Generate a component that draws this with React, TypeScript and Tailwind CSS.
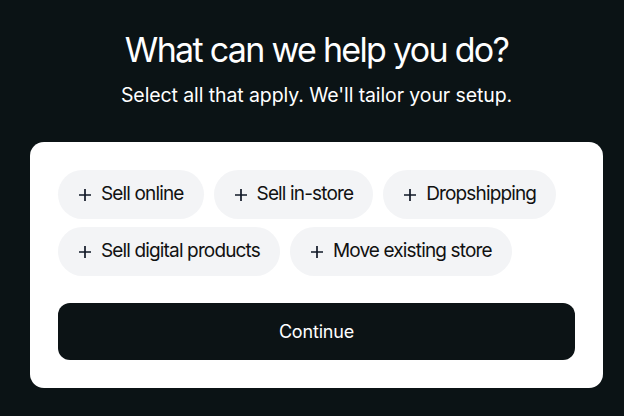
import React from "react";

const options = [
  "Sell online",
  "Sell in-store",
  "Dropshipping",
  "Sell digital products",
  "Move existing store",
];

function Plus() {
  return (
    <svg width="12" height="12" viewBox="0 0 12 12" fill="none" aria-hidden="true">
      <path d="M6 0V12M0 6H12" stroke="#111827" strokeWidth="1.7" />
    </svg>
  );
}

export default function App() {
  return (
    <div
      className="w-[624px] h-[416px] bg-[#0b1315] overflow-hidden"
      style={{ fontFamily: "Inter, 'Noto Sans', sans-serif" }}
    >
      <div className="ml-[30px] w-[573px] flex flex-col items-center">
        <h1 className="mt-[28px] text-[34px] leading-[44px] font-normal tracking-[-0.05em] text-white">
          What can we help you do?
        </h1>
        <p className="mt-[9px] text-[19.5px] leading-[28px] text-white tracking-[-0.005em]">
          Select all that apply. We'll tailor your setup.
        </p>
        <div className="mt-[33px] w-full bg-white rounded-[14px] p-[28px]">
          <div className="flex flex-wrap gap-x-[10px] gap-y-[8px]">
            {options.map((o) => (
              <div
                key={o}
                className="h-[49px] rounded-full bg-[#f3f4f6] pl-[21px] pr-[20px] flex items-center gap-[10px] text-[19px] tracking-[-0.045em] text-[#111111]"
              >
                <Plus />
                <span>{o}</span>
              </div>
            ))}
          </div>
          <button className="mt-[27px] w-full h-[57px] rounded-[12px] bg-[#0c1315] text-white text-[18px] font-normal tracking-[-0.01em] flex items-center justify-center">
            Continue
          </button>
        </div>
      </div>
    </div>
  );
}
